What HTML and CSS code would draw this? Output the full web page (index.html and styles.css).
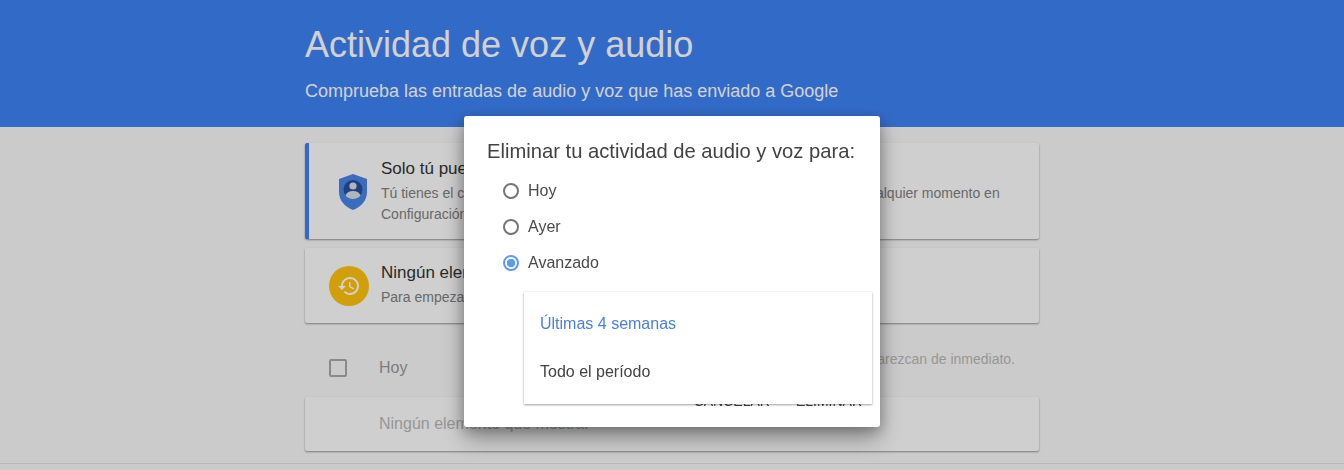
FILE: index.html
```html
<!DOCTYPE html>
<html lang="es">
<head>
  <meta charset="UTF-8" />
  <meta name="viewport" content="width=device-width, initial-scale=1.0"/>
  <title>Actividad de voz y audio</title>
  <link rel="stylesheet" href="styles.css">
</head>
<body>

<header class="banner">
  <div class="wrap">
    <h1>Actividad de voz y audio</h1>
    <p>Comprueba las entradas de audio y voz que has enviado a Google</p>
  </div>
</header>

<main class="wrap content">
  <section class="card card-privacy">
    <svg class="shield" viewBox="0 0 30 36" aria-hidden="true">
      <path fill="#4a84e8" d="M15 0 29 5v13c0 8.500-6 15-14 18C7 33 1 26.500 1 18V5z"/>
      <circle fill="#26509c" cx="15" cy="15.500" r="9.500"/>
      <circle fill="#d8dee8" cx="15" cy="12" r="3.600"/>
      <path fill="#d8dee8" d="M7.500 21.500c1-3.200 4-4.500 7.500-4.500s6.500 1.300 7.500 4.500c-1.500 2.300-4.300 3.500-7.500 3.500s-6-1.200-7.500-3.500z"/>
    </svg>
    <div class="card-text">
      <h2>Solo tú puedes ver estos datos</h2>
      <p>Tú tienes el control de tus datos. Puedes eliminar esta actividad de tu voz en cualquier momento en<br>Configuración de la cuenta.</p>
    </div>
  </section>

  <section class="card card-empty">
    <span class="history">
      <svg viewBox="0 0 24 24" aria-hidden="true">
        <path fill="#fff" d="M13 3c-4.970 0-9 4.030-9 9H1l3.890 3.890.07.14L9 12H6c0-3.870 3.130-7 7-7s7 3.130 7 7-3.130 7-7 7c-1.930 0-3.680-.79-4.940-2.060l-1.420 1.420C8.270 19.990 10.510 21 13 21c4.970 0 9-4.030 9-9s-4.030-9-9-9zm-1 5v5l4.280 2.540.72-1.210-3.500-2.080V8H12z"/>
      </svg>
    </span>
    <div class="card-text">
      <h2>Ningún elemento</h2>
      <p>Para empezar, usa tu voz con Google.</p>
    </div>
  </section>

  <div class="day-row">
    <span class="checkbox"></span>
    <span class="day-name">Hoy</span>
    <span class="day-note">Es posible que algunos elementos no aparezcan de inmediato.</span>
  </div>

  <section class="card card-none">Ningún elemento que mostrar</section>
</main>

<div class="footer-line"></div>

<div class="scrim"></div>

<div class="dialog">
  <h3>Eliminar tu actividad de audio y voz para:</h3>
  <ul class="options">
    <li><span class="radio"></span>Hoy</li>
    <li><span class="radio"></span>Ayer</li>
    <li><span class="radio radio-on"></span>Avanzado</li>
  </ul>
  <div class="actions">
    <span>CANCELAR</span>
    <span>ELIMINAR</span>
  </div>
  <div class="menu">
    <div class="menu-item menu-item-active">Últimas 4 semanas</div>
    <div class="menu-item">Todo el período</div>
  </div>
</div>

</body>
</html>
```

FILE: styles.css
```css
* {
  box-sizing: border-box;
}

html, body {
  height: 470px;
  overflow: hidden;
}

body {
  margin: 0;
  font-family: "Liberation Sans", Arial, sans-serif;
  background: #f8f8f8;
  color: #333;
}

.wrap {
  width: 734px;
  margin: 0 auto;
}

.banner {
  height: 127px;
  background: #3e82f4;
  color: #fff;
  padding-top: 24px;
}

.banner h1 {
  margin: 0;
  font-size: 36px;
  line-height: 42px;
  font-weight: 400;
}

.banner p {
  margin: 14px 0 0;
  font-size: 18px;
  line-height: 22px;
}

.content {
  padding-top: 16px;
}

.card {
  display: flex;
  align-items: center;
  background: #fdfdfd;
  border-radius: 2px;
  box-shadow: 0 1px 2px rgba(0, 0, 0, 0.4);
}

.card-privacy {
  height: 96px;
  padding-left: 29px;
  border-left: 4px solid #3e82f4;
}

.shield {
  width: 30px;
  height: 36px;
  flex: none;
  margin-right: 13px;
  position: relative;
  top: 1px;
}

.card-empty {
  height: 75px;
  margin-top: 9px;
  padding-left: 24px;
}

.history {
  width: 40px;
  height: 40px;
  flex: none;
  display: flex;
  align-items: center;
  justify-content: center;
  border-radius: 50%;
  background: #ffc20c;
  margin-right: 12px;
}

.history svg {
  width: 24px;
  height: 24px;
}

.card-text h2 {
  margin: 0;
  font-size: 17px;
  line-height: 22px;
  font-weight: 400;
}

.card-text p {
  margin: 3px 0 0;
  font-size: 14px;
  line-height: 21px;
  color: #808080;
}

.card-empty .card-text {
  position: relative;
  top: -1px;
}

.day-row {
  height: 74px;
  display: flex;
  align-items: center;
  padding: 16px 24px 0;
  font-size: 14px;
}

.checkbox {
  width: 18px;
  height: 18px;
  flex: none;
  border: 2px solid #a8a8a8;
  border-radius: 2px;
  margin-right: 32px;
}

.day-name {
  font-size: 16px;
  color: #999;
}

.day-note {
  margin-left: auto;
  color: #b8b8b8;
  position: relative;
  top: -9px;
}

.card-none {
  height: 54px;
  padding-left: 74px;
  font-size: 16px;
  color: #b8b8b8;
}

.footer-line {
  margin-top: 12px;
  border-top: 1px solid #e2e2e2;
}

.scrim {
  position: fixed;
  inset: 0;
  background: rgba(0, 0, 0, 0.18);
}

.dialog {
  position: fixed;
  left: 464px;
  top: 116px;
  width: 416px;
  height: 311px;
  padding: 24px 0 0 23px;
  background: #fff;
  border-radius: 3px;
  box-shadow: 0 12px 24px rgba(0, 0, 0, 0.3), 0 4px 14px rgba(0, 0, 0, 0.28);
}

.dialog h3 {
  margin: 0;
  font-size: 20.200px;
  line-height: 23px;
  font-weight: 400;
  color: #424242;
}

.options {
  list-style: none;
  margin: 10px 0 0;
  padding: 0 0 0 16px;
}

.options li {
  display: flex;
  align-items: center;
  height: 36px;
  font-size: 16px;
  color: #4a4a4a;
}

.radio {
  width: 16px;
  height: 16px;
  flex: none;
  border: 2px solid #757575;
  border-radius: 50%;
  margin-right: 9px;
}

.radio-on {
  border-color: #5c9bf5;
  background: radial-gradient(circle, #5c9bf5 0 4px, #fff 4.500px);
}

.actions {
  position: absolute;
  right: 18px;
  bottom: 18px;
  display: flex;
  gap: 26px;
  font-size: 14px;
  color: #424242;
}

.menu {
  position: absolute;
  left: 60px;
  top: 176px;
  width: 348px;
  height: 112px;
  padding: 8px 0;
  background: #fff;
  box-shadow: 0 1px 2px rgba(0, 0, 0, 0.35), 0 0 2px rgba(0, 0, 0, 0.08);
}

.menu-item {
  height: 48px;
  padding-left: 16px;
  display: flex;
  align-items: center;
  font-size: 16px;
  color: #424242;
}

.menu-item-active {
  color: #4a80dc;
}
```
